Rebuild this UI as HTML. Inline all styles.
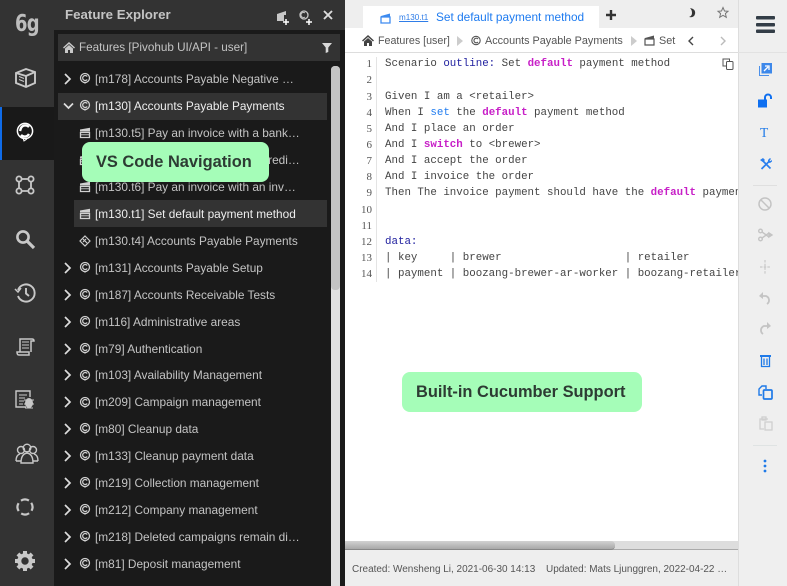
<!DOCTYPE html>
<html><head><meta charset="utf-8"><style>
*{box-sizing:border-box}
html,body{margin:0;padding:0;width:787px;height:586px;overflow:hidden;background:#fff;font-family:"Liberation Sans",sans-serif}
.a{position:absolute}
svg{position:absolute;overflow:visible}
.t{position:absolute;left:95px;font-size:11.85px;line-height:16px;color:#c4c4c4;white-space:nowrap}
.w{color:#eee}
.c{position:absolute;left:385px;font:10.8px/16px "Liberation Mono",monospace;color:#444;white-space:pre}
.n{position:absolute;left:345px;width:27px;text-align:right;font:11px/16px "Liberation Serif",serif;color:#555}
.k{color:#c71fc7;font-weight:bold}.b{color:#1e7bf0}.o{color:#1d1d9e}
.g{position:absolute;background:#a5fdb8;border-radius:8px;height:40px;font-weight:bold;font-size:16.4px;line-height:40px;color:#2d3b33;white-space:nowrap}
</style></head><body>
<svg width="0" height="0" style="position:absolute"><defs>
<g id="ch"><path d="M-3-5 2 0-3 5" fill="none" stroke="#ddd" stroke-width="1.7"/></g>
<g id="cc"><circle r="4.500" fill="none" stroke="#d0d0d0" stroke-width="1.3"/><path d="M2.200-1.500A2.500 2.500 0 1 0 2.200 1.500" fill="none" stroke="#d0d0d0" stroke-width="1.2"/><path d="M-1.200 4.500 0 6 1.200 4.500" fill="#d0d0d0"/></g>
<g id="cl"><path d="M-4.500-.5H4.500V4.500H-4.500Z" fill="none" stroke="#d0d0d0" stroke-width="1.300"/><path d="M-5-3.500 5-5.200V-1.500H-5Z" fill="#d0d0d0"/><path d="M-5 1.800H5" stroke="#d0d0d0" stroke-width=".9"/></g>
</defs></svg>

<!-- rail -->
<div class="a" style="left:0;top:0;width:54px;height:586px;background:#333"></div>
<div class="a" style="left:0;top:107px;width:54px;height:53px;background:#191919"></div>
<div class="a" style="left:0;top:107px;width:2px;height:53px;background:#0f6be8"></div>
<div class="a" style="left:15px;top:9px;font:bold 23px/30px 'DejaVu Sans',sans-serif;color:#bdbdbd;letter-spacing:-1px;transform:scaleX(.78);transform-origin:0 0">6g</div>
<svg style="left:15px;top:68px" width="22" height="20" fill="none" stroke="#c8c8c8" stroke-width="1.900"><path d="M1 5 11 1 20 4V15L11 19 1 15Z"/><path d="M1 5 11 8 20 4M11 8V19"/><path d="M4 8.500 9 10.500M4 11.500 9 13.500" stroke-width="1.200"/></svg>
<svg style="left:16px;top:122px" width="18" height="20" fill="none" stroke="#fff" stroke-width="1.500"><circle cx="9" cy="9" r="7.600"/><path d="M13 5A5 5 0 0 0 5 6L4 9M5 13A5 5 0 0 0 13 12" stroke-width="2.400"/><path d="M7 16 8 19 11 17" stroke-width="1"/></svg>
<svg style="left:15px;top:175px" width="20" height="20" fill="none" stroke="#c8c8c8" stroke-width="1.800"><circle cx="4" cy="4" r="2.600"/><circle cx="16" cy="4" r="2.600"/><circle cx="4" cy="16" r="2.600"/><circle cx="16" cy="16" r="2.600"/><path d="M7 4H13M4 7V13M16 7V13M7 16H13"/></svg>
<svg style="left:15px;top:229px" width="20" height="20" fill="none" stroke="#c8c8c8"><circle cx="8" cy="8" r="5.600" stroke-width="2.600"/><path d="M12 12 19 19" stroke-width="3.200"/></svg>
<svg style="left:15px;top:283px" width="22" height="20" fill="none" stroke="#c8c8c8" stroke-width="1.900"><path d="M3 7A8.600 8.600 0 1 1 3 13"/><path d="M0 6 3 9 6 5" stroke-width="1.500"/><path d="M11 5V10.500L14 13"/></svg>
<svg style="left:16px;top:337px" width="19" height="20" fill="none" stroke="#c8c8c8" stroke-width="1.500"><path d="M4 15V2H16Q18 2 18 4H15V15"/><path d="M1 15H13V18H3Q1 18 1 15Z"/><path d="M6 5H13M6 8H13M6 11H13" stroke-width="1"/></svg>
<svg style="left:15px;top:390px" width="20" height="19" fill="none" stroke="#c8c8c8" stroke-width="1.400"><path d="M11 17H1V1H15V7"/><path d="M4 5H12M4 8H10M4 11H9M4 14H8" stroke-width="1"/><ellipse cx="14" cy="13" rx="4" ry="5" fill="#c8c8c8" stroke="none"/><path d="M9 10 19 10M9 14H19M10 18 18 18" stroke-width=".9"/></svg>
<svg style="left:15px;top:443px" width="24" height="21" fill="none" stroke="#c8c8c8" stroke-width="1.400"><circle cx="12" cy="5" r="3.800"/><circle cx="6" cy="7" r="3.500"/><circle cx="18" cy="7" r="3.500"/><path d="M1 18Q1 12 5 11M23 18Q23 12 19 11M1 18H6M18 18H23M6 20Q6 11 12 10 18 11 18 20Z"/></svg>
<svg style="left:16px;top:498px" width="18" height="18" fill="none" stroke="#c8c8c8" stroke-width="2.200" stroke-dasharray="8.300 3.480"><circle cx="9" cy="9" r="7.500" transform="rotate(-34 9 9)"/></svg>
<svg style="left:15px;top:551px" width="20" height="20" fill="#c8c8c8"><circle cx="10" cy="10" r="5.700" fill="none" stroke="#c8c8c8" stroke-width="4"/><path d="M8 0H12V4H8ZM8 16H12V20H8ZM0 8H4V12H0ZM16 8H20V12H16Z"/><path d="M8 0H12V4H8ZM8 16H12V20H8ZM0 8H4V12H0ZM16 8H20V12H16Z" transform="rotate(45 10 10)"/></svg>

<!-- explorer -->
<div class="a" style="left:54px;top:0;width:291px;height:586px;background:#1a1a1a"></div>
<div class="a" style="left:54px;top:0;width:291px;height:30px;background:#333"></div>
<div class="a" style="left:65px;top:7px;font-size:13.300px;line-height:16px;font-weight:bold;color:#c4c4c4">Feature Explorer</div>
<svg style="left:276px;top:10px" width="14" height="15"><path d="M1 4 10 1V5H1ZM1 5H8V11H1Z" fill="#c8c8c8"/><path d="M10 9V15M7 12H13" stroke="#fff" stroke-width="1.500"/></svg>
<svg style="left:299px;top:10px" width="14" height="15" fill="none"><circle cx="5" cy="5" r="4" stroke="#c8c8c8" stroke-width="1.300"/><path d="M6 3A2.500 2.500 0 1 0 6 7" stroke="#c8c8c8"/><path d="M10 9V15M7 12H13" stroke="#fff" stroke-width="1.500"/></svg>
<svg style="left:323px;top:10px" width="10" height="10"><path d="M1 1 9 9M9 1 1 9" stroke="#ddd" stroke-width="1.900"/></svg>
<div class="a" style="left:58px;top:34px;width:282px;height:27px;background:#333"></div>
<svg style="left:63px;top:42px" width="12" height="11" fill="#c8c8c8"><path d="M6 0 12 5.500 11 6.500 6 2 1 6.500 0 5.500ZM2 6.500 6 3 10 6.500V11H7V8H5V11H2Z"/></svg>
<div class="t" style="left:79px;top:40px;color:#c4c4c4;font-size:11.700px">Features [Pivohub UI/API - user]</div>
<svg style="left:322px;top:43px" width="10" height="10" fill="#d8d8d8"><path d="M0 0H10L6.300 4.500V9L3.700 10V4.500Z"/></svg>
<div class="a" style="left:331px;top:66px;width:9px;height:520px;background:#e0e0e0;border-radius:4px 4px 0 0"></div>
<div class="a" style="left:331px;top:66px;width:9px;height:224px;background:#c4c4c4;border-radius:4px"></div>
<div class="a" style="left:58px;top:93px;width:269px;height:27px;background:#333"></div>
<div class="a" style="left:74px;top:200px;width:253px;height:27px;background:#333"></div>

<svg style="left:0;top:0" width="345" height="586">
<use href="#ch" x="68" y="79"/><use href="#cc" x="85" y="78"/>
<path d="M64 103.500 68.500 108 73 103.500" fill="none" stroke="#ddd" stroke-width="1.700"/><use href="#cc" x="85" y="105"/>
<use href="#cl" x="85" y="133"/><use href="#cl" x="85" y="160"/><use href="#cl" x="85" y="187"/><use href="#cl" x="85" y="214"/>
<g transform="translate(85 241)" fill="none" stroke="#ccc" stroke-width="1.200"><path d="M0-5 5 0 0 5-5 0Z"/><path d="M-2-2 2 2M-2 1 1 -2"/></g>
<use href="#ch" x="68" y="268"/><use href="#cc" x="85" y="267"/>
<use href="#ch" x="68" y="295"/><use href="#cc" x="85" y="294"/>
<use href="#ch" x="68" y="322"/><use href="#cc" x="85" y="321"/>
<use href="#ch" x="68" y="349"/><use href="#cc" x="85" y="348"/>
<use href="#ch" x="68" y="375"/><use href="#cc" x="85" y="375"/>
<use href="#ch" x="68" y="402"/><use href="#cc" x="85" y="402"/>
<use href="#ch" x="68" y="429"/><use href="#cc" x="85" y="428"/>
<use href="#ch" x="68" y="456"/><use href="#cc" x="85" y="455"/>
<use href="#ch" x="68" y="483"/><use href="#cc" x="85" y="482"/>
<use href="#ch" x="68" y="510"/><use href="#cc" x="85" y="509"/>
<use href="#ch" x="68" y="537"/><use href="#cc" x="85" y="536"/>
<use href="#ch" x="68" y="564"/><use href="#cc" x="85" y="563"/>
</svg>
<div class="t" style="top:71px">[m178] Accounts Payable Negative …</div>
<div class="t w" style="top:98px">[m130] Accounts Payable Payments</div>
<div class="t" style="top:125px">[m130.t5] Pay an invoice with a bank…</div>
<div class="t" style="top:152px">[m130.t2] Pay an invoice with a credi…</div>
<div class="t" style="top:179px">[m130.t6] Pay an invoice with an inv…</div>
<div class="t w" style="top:206px">[m130.t1] Set default payment method</div>
<div class="t" style="top:233px">[m130.t4] Accounts Payable Payments</div>
<div class="t" style="top:260px">[m131] Accounts Payable Setup</div>
<div class="t" style="top:287px">[m187] Accounts Receivable Tests</div>
<div class="t" style="top:314px">[m116] Administrative areas</div>
<div class="t" style="top:341px">[m79] Authentication</div>
<div class="t" style="top:367px">[m103] Availability Management</div>
<div class="t" style="top:394px">[m209] Campaign management</div>
<div class="t" style="top:421px">[m80] Cleanup data</div>
<div class="t" style="top:448px">[m133] Cleanup payment data</div>
<div class="t" style="top:475px">[m219] Collection management</div>
<div class="t" style="top:502px">[m212] Company management</div>
<div class="t" style="top:529px">[m218] Deleted campaigns remain di…</div>
<div class="t" style="top:556px">[m81] Deposit management</div>

<!-- tab bar -->
<div class="a" style="left:345px;top:0;width:393px;height:28px;background:#eee"></div>
<div class="a" style="left:363px;top:6px;width:236px;height:22px;background:#fff"></div>
<svg style="left:380px;top:13px" width="11" height="11"><path d="M1 4H10V10H1Z" fill="none" stroke="#3d8bf0" stroke-width="1.300"/><path d="M1 3 10 .5V3.500H1Z" fill="#3d8bf0"/></svg>
<div class="a" style="left:399px;top:11px;font-size:8.100px;line-height:14px;color:#2f7de8;text-decoration:underline">m130.t1</div>
<div class="a" style="left:436px;top:9px;font-size:11.850px;line-height:16px;color:#1e7bf0;white-space:nowrap">Set default payment method</div>
<svg style="left:606px;top:10px" width="10" height="10"><path d="M5 0V10M0 5H10" stroke="#333" stroke-width="2.400"/></svg>
<svg style="left:688px;top:8px" width="8" height="10"><path d="M2 0Q8 1 7 6 6 10 1 9 4 8 4 5 4 2 2 0Z" fill="#333"/></svg>
<svg style="left:717px;top:7px" width="12" height="11" fill="none" stroke="#777"><path d="M6 .5 7.500 4 11 4.300 8.400 6.600 9.300 10.300 6 8.300 2.700 10.300 3.600 6.600 1 4.300 4.500 4Z"/></svg>

<!-- breadcrumb -->
<div class="a" style="left:345px;top:52px;width:393px;height:1px;background:#ddd"></div>
<svg style="left:362px;top:35px" width="12" height="11" fill="#444"><path d="M6 0 12 5.500 11 6.500 6 2 1 6.500 0 5.500ZM2 6.500 6 3 10 6.500V11H7V8H5V11H2Z"/></svg>
<div class="a" style="left:378px;top:34px;font-size:10.700px;line-height:15px;color:#555;white-space:nowrap">Features [user]</div>
<svg style="left:457px;top:36px" width="6" height="10"><path d="M0 0 6 5 0 10Z" fill="#ccc"/></svg>
<svg style="left:470px;top:35px" width="12" height="12"><g transform="translate(6 5.500)" fill="none" stroke="#555" stroke-width="1.100"><circle r="4.200"/><path d="M2-1.500A2.300 2.300 0 1 0 2 1.500"/></g></svg>
<div class="a" style="left:485px;top:34px;font-size:10.830px;line-height:15px;color:#555;white-space:nowrap">Accounts Payable Payments</div>
<svg style="left:631px;top:36px" width="6" height="10"><path d="M0 0 6 5 0 10Z" fill="#ccc"/></svg>
<svg style="left:644px;top:35px" width="11" height="11"><path d="M1 4H10V10H1Z" fill="none" stroke="#555" stroke-width="1.200"/><path d="M1 3 10 .5V3.500H1Z" fill="#555"/></svg>
<div class="a" style="left:659px;top:34px;font-size:10.830px;line-height:15px;color:#555">Set</div>
<svg style="left:688px;top:36px" width="6" height="10"><path d="M5 1 1 5 5 9" fill="none" stroke="#444" stroke-width="1.400"/></svg>
<svg style="left:720px;top:36px" width="6" height="10"><path d="M1 1 5 5 1 9" fill="none" stroke="#bbb" stroke-width="1.400"/></svg>

<!-- code -->
<div class="a" style="left:376px;top:57px;width:1px;height:225px;background:#e4e4e4"></div>
<div class="n" style="top:56px">1</div><div class="n" style="top:72px">2</div><div class="n" style="top:89px">3</div><div class="n" style="top:105px">4</div><div class="n" style="top:121px">5</div><div class="n" style="top:137px">6</div><div class="n" style="top:153px">7</div><div class="n" style="top:169px">8</div><div class="n" style="top:185px">9</div><div class="n" style="top:202px">10</div><div class="n" style="top:218px">11</div><div class="n" style="top:234px">12</div><div class="n" style="top:250px">13</div><div class="n" style="top:266px">14</div>
<div class="c" style="top:56px">Scenario <span class="o">outline:</span> Set <span class="k">default</span> payment method</div>
<div class="c" style="top:89px">Given I am a &lt;retailer&gt;</div>
<div class="c" style="top:105px">When I <span class="b">set</span> the <span class="k">default</span> payment method</div>
<div class="c" style="top:121px">And I place an order</div>
<div class="c" style="top:137px">And I <span class="k">switch</span> to &lt;brewer&gt;</div>
<div class="c" style="top:153px">And I accept the order</div>
<div class="c" style="top:169px">And I invoice the order</div>
<div class="a" style="left:345px;top:185px;width:393px;height:16px;overflow:hidden"><div class="c" style="left:40px;top:0">Then The invoice payment should have the <span class="k">default</span> payment</div></div>
<div class="c" style="top:234px"><span class="o">data:</span></div>
<div class="c" style="top:250px">| key     | brewer                   | retailer</div>
<div class="a" style="left:345px;top:266px;width:393px;height:16px;overflow:hidden"><div class="c" style="left:40px;top:0">| payment | boozang-brewer-ar-worker | boozang-retailer</div></div>
<svg style="left:722px;top:58px" width="12" height="12" fill="none" stroke="#555"><path d="M7.500 3V1H1V8H4"/><rect x="4.500" y="3.500" width="6.500" height="8" rx="1"/></svg>

<div class="g" style="left:82px;top:142px;width:187px;padding-left:14px">VS Code Navigation</div>
<div class="g" style="left:402px;top:372px;width:240px;padding-left:14px">Built-in Cucumber Support</div>

<!-- bottom -->
<div class="a" style="left:345px;top:541px;width:393px;height:9px;background:#ddd;border-bottom:1px solid #aaa"></div>
<div class="a" style="left:345px;top:541px;width:270px;height:9px;background:linear-gradient(#d2d2d2,#a8a8a8);border-bottom:1px solid #888;border-radius:0 4px 4px 0"></div>
<div class="a" style="left:345px;top:550px;width:393px;height:36px;background:#eee"></div>
<div class="a" style="left:352px;top:563px;font-size:9.980px;line-height:14px;color:#555;white-space:nowrap">Created: Wensheng Li, 2021-06-30 14:13</div>
<div class="a" style="left:546px;top:563px;font-size:9.980px;line-height:14px;color:#555;white-space:nowrap">Updated: Mats Ljunggren, 2022-04-22 …</div>

<!-- right bar -->
<div class="a" style="left:738px;top:0;width:49px;height:586px;background:#efefef;border-left:1px solid #ddd"></div>
<div class="a" style="left:738px;top:52px;width:49px;height:1px;background:#e2e2e2"></div>
<svg style="left:756px;top:16px" width="20" height="18" fill="#333d47"><rect y="0" width="19" height="3.500" rx="1"/><rect y="7" width="19" height="3.500" rx="1"/><rect y="13.500" width="19" height="3.500" rx="1"/></svg>
<svg style="left:759px;top:63px" width="13" height="13"><path d="M.5 3V12.500H10" fill="none" stroke="#4b90ea"/><rect x="2.500" y="0" width="10.500" height="10.500" fill="#3d88ea"/><path d="M5 8 9 4M6 3H10V7" stroke="#fff" stroke-width="1.300" fill="none"/></svg>
<svg style="left:758px;top:94px" width="15" height="14"><rect x="0" y="5.500" width="9" height="8" fill="#0e6ff0"/><path d="M7 6V3.500A3 3 0 0 1 13 3.500V5" fill="none" stroke="#0e6ff0" stroke-width="2"/></svg>
<div class="a" style="left:760px;top:125px;font:13.500px/16px 'Liberation Serif',serif;color:#1f7ae8">T</div>
<svg style="left:760px;top:158px" width="12" height="12"><path d="M1.500 11 8.500 4M3 3 10.500 10.500" stroke="#2a7fee" stroke-width="1.700"/><path d="M8 2 10 0 11 1 9.500 2.500 10.500 3 12 2V3.500L10 5 8 4.500ZM0 2 3 0 5 2 3 4 2 3.500Z" fill="#2a7fee"/></svg>
<div class="a" style="left:753px;top:185px;width:24px;height:1px;background:#dfdfdf"></div>
<svg style="left:758px;top:197px" width="14" height="14" fill="none" stroke="#c4c4c4" stroke-width="1.500"><circle cx="7" cy="7" r="6"/><path d="M3 3 11 11"/></svg>
<svg style="left:758px;top:228px" width="14" height="14" fill="none" stroke="#c4c4c4" stroke-width="1.400"><circle cx="2.500" cy="3" r="1.800"/><circle cx="2.500" cy="11" r="1.800"/><path d="M4 4 11 9M4 10 11 5"/><path d="M11 5 14 7 11 9Z" fill="#c4c4c4"/></svg>
<svg style="left:759px;top:260px" width="13" height="14" fill="none" stroke="#c9c9c9" stroke-width="1.200" stroke-dasharray="2.500 1.200"><path d="M6 0V14M1 7H12"/></svg>
<svg style="left:758px;top:291px" width="14" height="14" fill="none" stroke="#c4c4c4" stroke-width="1.800"><path d="M3 5H8A4.500 4.500 0 0 1 9 13"/><path d="M5 1 1 5 5 8" fill="#c4c4c4" stroke="none"/></svg>
<svg style="left:758px;top:321px" width="14" height="14" fill="none" stroke="#c4c4c4" stroke-width="1.800"><path d="M11 5H6A4.500 4.500 0 0 0 5 13"/><path d="M9 1 13 5 9 8" fill="#c4c4c4" stroke="none"/></svg>
<svg style="left:760px;top:354px" width="11" height="13" fill="none" stroke="#1f7ae8" stroke-width="1.300"><path d="M0 2H11" stroke-width="2"/><path d="M1.500 3V12.500H9.500V3M4 4.500V11M7 4.500V11"/></svg>
<svg style="left:758px;top:385px" width="15" height="15" fill="none" stroke="#1f7ae8" stroke-width="1.400"><path d="M8 4V1H4L1 4V10H4"/><rect x="5.500" y="5" width="8.500" height="9" rx="1" stroke-width="1.700"/></svg>
<svg style="left:759px;top:416px" width="14" height="15" fill="none" stroke="#cfcfcf" stroke-width="1.300"><path d="M9 3H1V13H5"/><rect x="3" y="1" width="4" height="3"/><rect x="6" y="6" width="7" height="8"/></svg>
<div class="a" style="left:753px;top:445px;width:24px;height:1px;background:#dfe3e3"></div>
<svg style="left:763px;top:459px" width="4" height="14" fill="#1f7ae8"><circle cx="2" cy="2" r="1.400"/><circle cx="2" cy="7" r="1.400"/><circle cx="2" cy="12" r="1.400"/></svg>
</body></html>
